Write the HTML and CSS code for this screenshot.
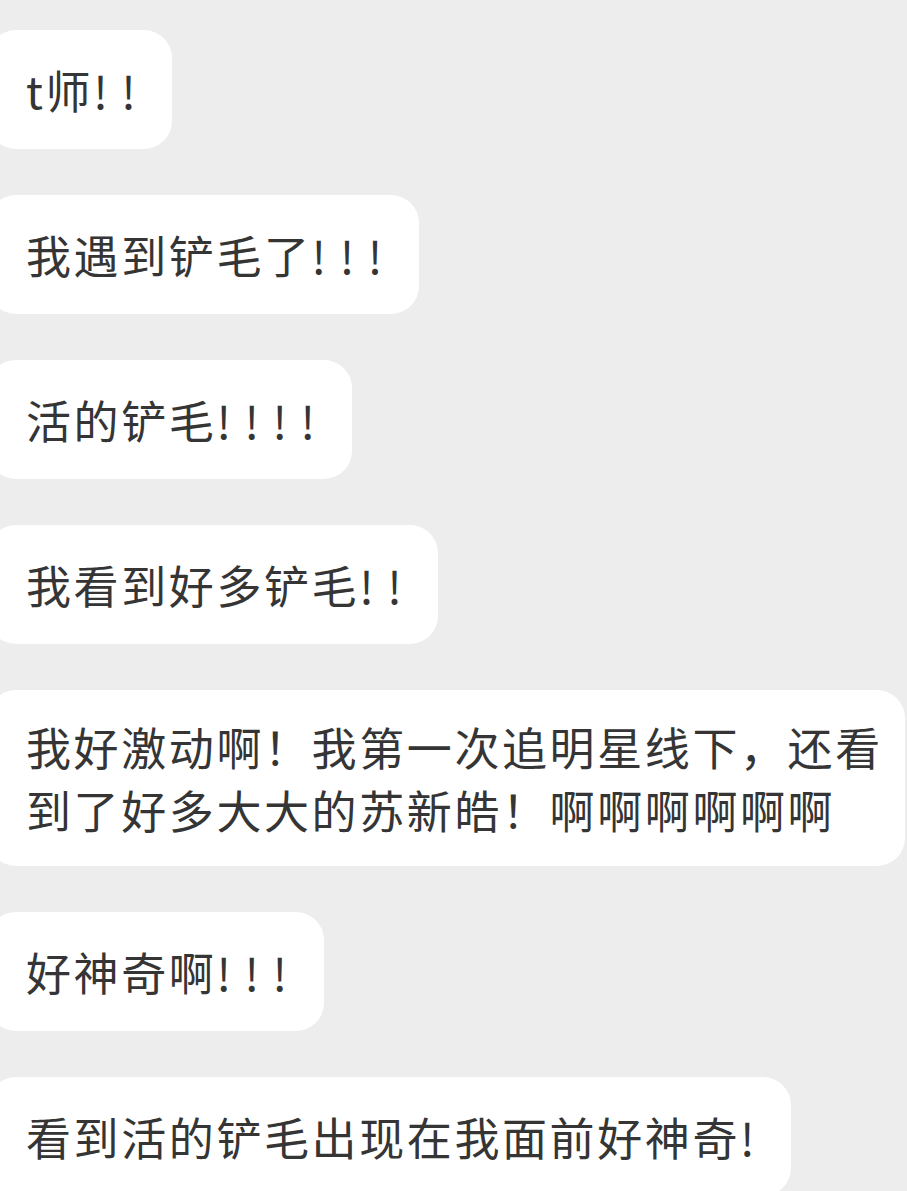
FILE: index.html
```html
<!DOCTYPE html>
<html lang="zh-CN">
<head>
    <meta charset="UTF-8">
    <meta name="viewport" content="width=device-width, initial-scale=1.0">
    <title>聊天记录</title>
    <link rel="stylesheet" href="styles.css">
</head>
<body>
    <div class="chat">
        <div class="bubble">t师<span class="bang">!!</span></div>
        <div class="bubble">我遇到铲毛了<span class="bang">!!!</span></div>
        <div class="bubble">活的铲毛<span class="bang">!!!!</span></div>
        <div class="bubble">我看到好多铲毛<span class="bang">!!</span></div>
        <div class="bubble multi">我好激动啊！我第一次追明星线下，还看<br>到了好多大大的苏新皓！啊啊啊啊啊啊</div>
        <div class="bubble">好神奇啊<span class="bang">!!!</span></div>
        <div class="bubble">看到活的铲毛出现在我面前好神奇<span class="bang">!</span></div>
    </div>
</body>
</html>
```

FILE: styles.css
```css
body {
    margin: 0;
    background-color: #ededed;
    font-family: "Noto Sans CJK SC", "Noto Sans", sans-serif;
    overflow: hidden;
}

.chat {
    display: flex;
    flex-direction: column;
    align-items: flex-start;
    gap: 46px;
    padding-top: 30px;
}

.bubble {
    margin-left: -12px;
    padding: 28px 23px 28px 38px;
    background-color: #fff;
    border-radius: 28px;
    color: #353535;
    font-size: 45px;
    line-height: 63px;
    letter-spacing: 2.6px;
    white-space: nowrap;
}

.bubble.multi {
    padding-top: 25px;
    padding-bottom: 25px;
    padding-right: 22px;
}

.bang {
    letter-spacing: 13.5px;
}
```
